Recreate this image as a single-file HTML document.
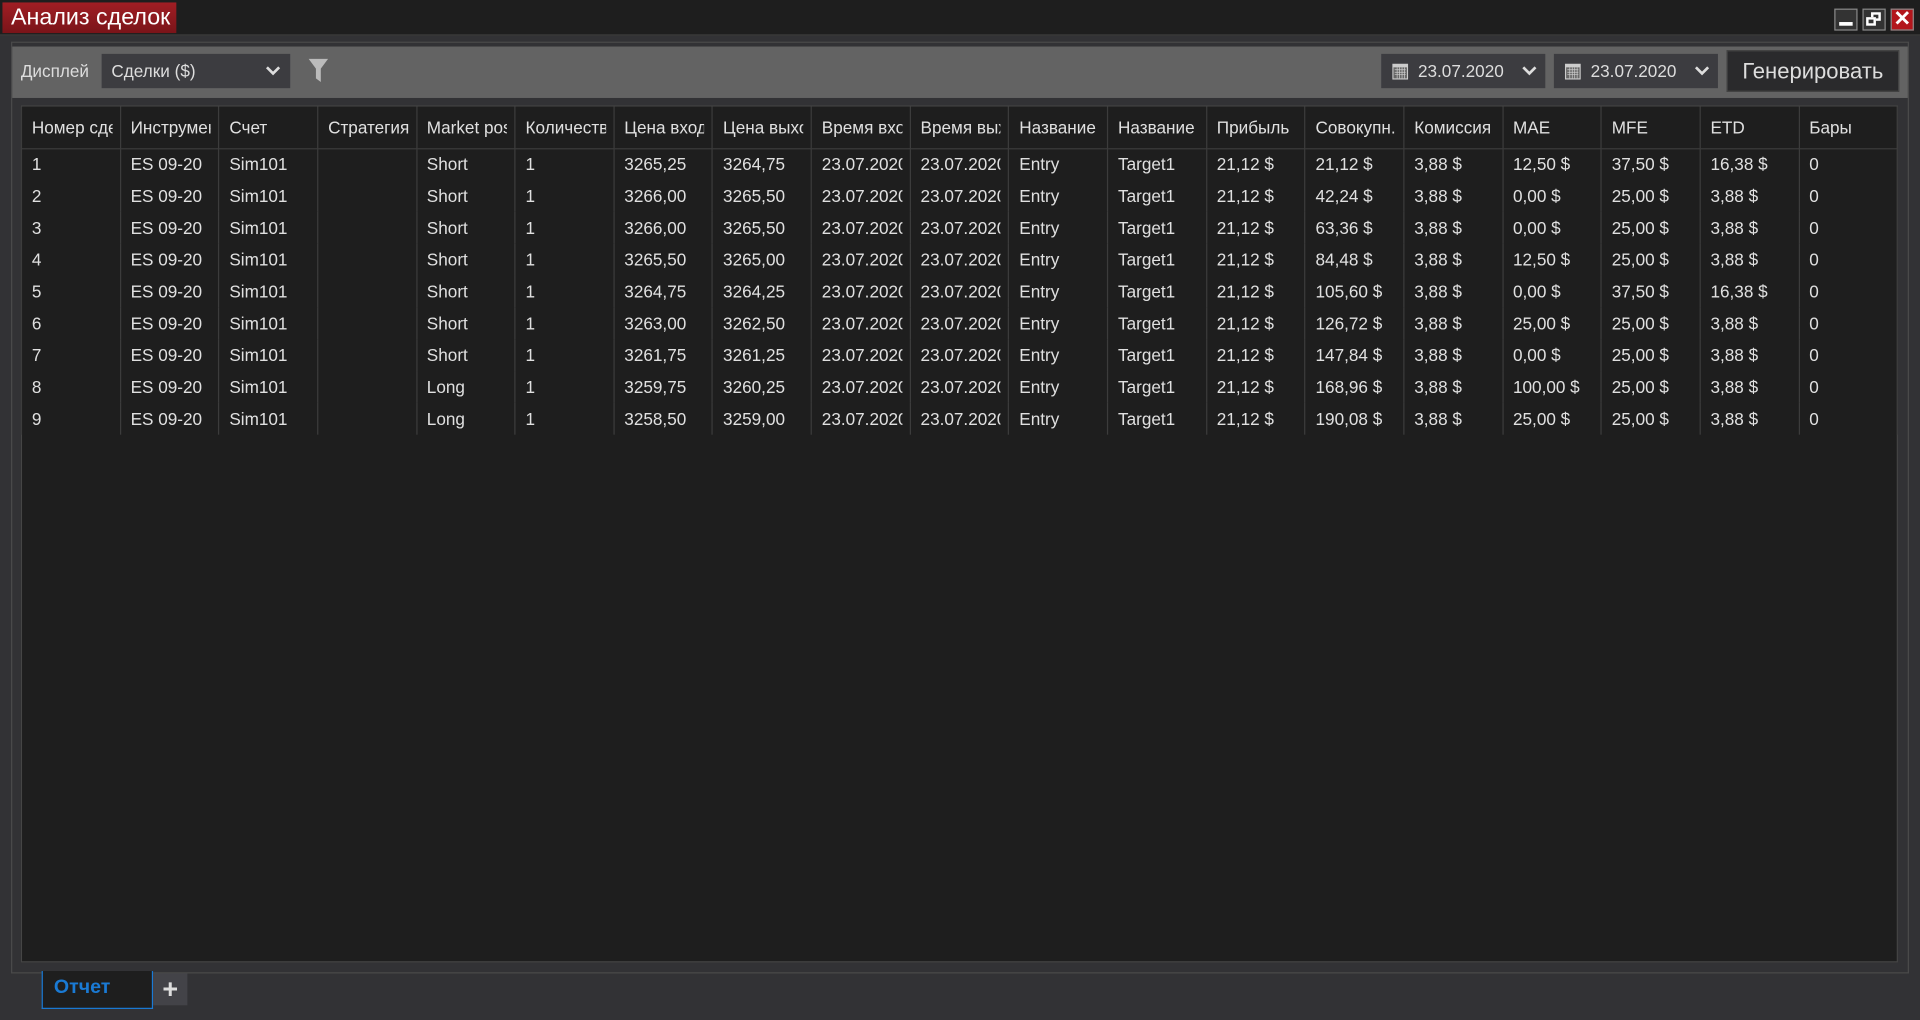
<!DOCTYPE html>
<html><head><meta charset="utf-8"><style>
html,body{margin:0;padding:0;width:1920px;height:1020px;overflow:hidden;background:#323235;}
#s{position:absolute;left:0;top:0;width:1568px;height:833px;transform:scale(1.22449);transform-origin:0 0;font-family:"Liberation Sans",sans-serif;color:#ddd;background:#323235;}
.a{position:absolute;}
#tb{left:0;top:0;width:1568px;height:28px;background:#1e1e1e;border-bottom:1px solid #3a3a3a;}
#tt{left:2px;top:2px;width:142px;height:25px;background:linear-gradient(#a01e24,#7a1419);color:#fff;font-size:19px;line-height:25px;padding-left:7px;box-sizing:border-box;}
.wb{top:7px;width:19px;height:18px;border:1px solid #888;box-sizing:border-box;background:#333;}
#frame{left:9px;top:34px;width:1550px;height:761px;border:1px solid #4a4a4a;box-sizing:border-box;}
#tool{left:10px;top:38px;width:1548px;height:42px;background:#636363;}
.dd{background:#3c3c40;height:28px;top:44px;font-size:14px;line-height:28px;color:#ddd;box-sizing:border-box;}
#grid{left:17px;top:86px;width:1533px;height:700px;background:#1e1e1e;border:1px solid #454545;box-sizing:border-box;}
table{position:absolute;left:17px;top:87px;border-collapse:collapse;font-size:14px;table-layout:fixed;}
td{width:80.65px;max-width:80.65px;padding:0 6px 0 8px;box-sizing:border-box;white-space:nowrap;overflow:hidden;height:26px;border-left:1px solid #3c3c3c;border-right:1px solid #3c3c3c;color:#e0e0e0;}
td b{display:block;overflow:hidden;font-weight:normal;}
tr.h td{height:34px;border-bottom:1px solid #3c3c3c;}
</style></head><body><div id="s">
<div class="a" id="tb"></div>
<div class="a" id="tt">Анализ сделок</div>
<div class="a wb" style="left:1498px"><div class="a" style="left:3px;top:10px;width:11px;height:3px;background:#fff"></div></div>
<div class="a wb" style="left:1521px"><div class="a" style="left:6px;top:2px;width:8px;height:7px;border:2px solid #fff;box-sizing:border-box"></div><div class="a" style="left:2px;top:6px;width:8px;height:7px;border:2px solid #fff;background:#333;box-sizing:border-box"></div></div>
<div class="a wb" style="left:1544px;background:#b3161c;color:#fff;font-size:17px;font-weight:bold;line-height:16px;text-align:center">✕</div>
<div class="a" id="frame"></div>
<div class="a" id="tool"></div>
<div class="a" style="left:17px;top:44px;font-size:14px;line-height:28px;color:#ddd">Дисплей</div>
<div class="a dd" style="left:83px;width:154px;padding-left:8px">Сделки ($)<svg class="a" style="left:134px;top:10px" width="12" height="9" viewBox="0 0 12 9"><path d="M1 1l5 5 5-5" stroke="#ddd" stroke-width="2.2" fill="none"/></svg></div>
<svg class="a" style="left:252px;top:48px" width="16" height="20" viewBox="0 0 16 20"><path d="M0 0h16l-6 8v11l-4-3V8z" fill="#bbb"/></svg>
<div class="a dd" style="left:1128px;width:134px;padding-left:30px">23.07.2020<svg class="a" style="left:9px;top:8px" width="13" height="13"><rect x="0" y="0" width="13" height="13" fill="#ccc"/><rect x="1" y="3" width="11" height="9" fill="#666"/><path d="M2 5h9M2 7h9M2 9h9M4 3v9M6 3v9M8 3v9M10 3v9" stroke="#ccc" stroke-width=".6"/></svg><svg class="a" style="left:115px;top:10px" width="12" height="9"><path d="M1 1l5 5 5-5" stroke="#ddd" stroke-width="2.2" fill="none"/></svg></div>
<div class="a dd" style="left:1269px;width:134px;padding-left:30px">23.07.2020<svg class="a" style="left:9px;top:8px" width="13" height="13"><rect x="0" y="0" width="13" height="13" fill="#ccc"/><rect x="1" y="3" width="11" height="9" fill="#666"/><path d="M2 5h9M2 7h9M2 9h9M4 3v9M6 3v9M8 3v9M10 3v9" stroke="#ccc" stroke-width=".6"/></svg><svg class="a" style="left:115px;top:10px" width="12" height="9"><path d="M1 1l5 5 5-5" stroke="#ddd" stroke-width="2.2" fill="none"/></svg></div>
<div class="a" style="left:1410px;top:41px;width:141px;height:34px;background:#2a2a2c;border:1px solid #444;box-sizing:border-box;font-size:18px;line-height:32px;text-align:center;color:#ddd">Генерировать</div>
<div class="a" id="grid"></div>
<table>
<tr class="h"><td><b>Номер сделки</b></td><td><b>Инструмент</b></td><td><b>Счет</b></td><td><b>Стратегия</b></td><td><b>Market pos.</b></td><td><b>Количество</b></td><td><b>Цена входа</b></td><td><b>Цена выхода</b></td><td><b>Время входа</b></td><td><b>Время выхода</b></td><td><b>Название</b></td><td><b>Название</b></td><td><b>Прибыль</b></td><td><b>Совокупн.</b></td><td><b>Комиссия</b></td><td><b>MAE</b></td><td><b>MFE</b></td><td><b>ETD</b></td><td><b>Бары</b></td></tr>
<tr><td>1</td><td>ES 09-20</td><td>Sim101</td><td></td><td>Short</td><td>1</td><td>3265,25</td><td>3264,75</td><td><b>23.07.2020</b></td><td><b>23.07.2020</b></td><td>Entry</td><td>Target1</td><td>21,12 $</td><td>21,12 $</td><td>3,88 $</td><td>12,50 $</td><td>37,50 $</td><td>16,38 $</td><td>0</td></tr>
<tr><td>2</td><td>ES 09-20</td><td>Sim101</td><td></td><td>Short</td><td>1</td><td>3266,00</td><td>3265,50</td><td><b>23.07.2020</b></td><td><b>23.07.2020</b></td><td>Entry</td><td>Target1</td><td>21,12 $</td><td>42,24 $</td><td>3,88 $</td><td>0,00 $</td><td>25,00 $</td><td>3,88 $</td><td>0</td></tr>
<tr><td>3</td><td>ES 09-20</td><td>Sim101</td><td></td><td>Short</td><td>1</td><td>3266,00</td><td>3265,50</td><td><b>23.07.2020</b></td><td><b>23.07.2020</b></td><td>Entry</td><td>Target1</td><td>21,12 $</td><td>63,36 $</td><td>3,88 $</td><td>0,00 $</td><td>25,00 $</td><td>3,88 $</td><td>0</td></tr>
<tr><td>4</td><td>ES 09-20</td><td>Sim101</td><td></td><td>Short</td><td>1</td><td>3265,50</td><td>3265,00</td><td><b>23.07.2020</b></td><td><b>23.07.2020</b></td><td>Entry</td><td>Target1</td><td>21,12 $</td><td>84,48 $</td><td>3,88 $</td><td>12,50 $</td><td>25,00 $</td><td>3,88 $</td><td>0</td></tr>
<tr><td>5</td><td>ES 09-20</td><td>Sim101</td><td></td><td>Short</td><td>1</td><td>3264,75</td><td>3264,25</td><td><b>23.07.2020</b></td><td><b>23.07.2020</b></td><td>Entry</td><td>Target1</td><td>21,12 $</td><td>105,60 $</td><td>3,88 $</td><td>0,00 $</td><td>37,50 $</td><td>16,38 $</td><td>0</td></tr>
<tr><td>6</td><td>ES 09-20</td><td>Sim101</td><td></td><td>Short</td><td>1</td><td>3263,00</td><td>3262,50</td><td><b>23.07.2020</b></td><td><b>23.07.2020</b></td><td>Entry</td><td>Target1</td><td>21,12 $</td><td>126,72 $</td><td>3,88 $</td><td>25,00 $</td><td>25,00 $</td><td>3,88 $</td><td>0</td></tr>
<tr><td>7</td><td>ES 09-20</td><td>Sim101</td><td></td><td>Short</td><td>1</td><td>3261,75</td><td>3261,25</td><td><b>23.07.2020</b></td><td><b>23.07.2020</b></td><td>Entry</td><td>Target1</td><td>21,12 $</td><td>147,84 $</td><td>3,88 $</td><td>0,00 $</td><td>25,00 $</td><td>3,88 $</td><td>0</td></tr>
<tr><td>8</td><td>ES 09-20</td><td>Sim101</td><td></td><td>Long</td><td>1</td><td>3259,75</td><td>3260,25</td><td><b>23.07.2020</b></td><td><b>23.07.2020</b></td><td>Entry</td><td>Target1</td><td>21,12 $</td><td>168,96 $</td><td>3,88 $</td><td>100,00 $</td><td>25,00 $</td><td>3,88 $</td><td>0</td></tr>
<tr><td>9</td><td>ES 09-20</td><td>Sim101</td><td></td><td>Long</td><td>1</td><td>3258,50</td><td>3259,00</td><td><b>23.07.2020</b></td><td><b>23.07.2020</b></td><td>Entry</td><td>Target1</td><td>21,12 $</td><td>190,08 $</td><td>3,88 $</td><td>25,00 $</td><td>25,00 $</td><td>3,88 $</td><td>0</td></tr>
</table>
<div class="a" style="left:34px;top:793px;width:91px;height:31px;background:#1e1e1e;border:1px solid #1a7ad4;border-top:none;box-sizing:border-box;color:#1a7ad4;font-size:16px;font-weight:bold;line-height:28px;padding-left:9px">Отчет</div>
<div class="a" style="left:125px;top:795px;width:28px;height:26px;background:#434348;color:#ddd;font-size:22px;font-weight:bold;line-height:25px;text-align:center">+</div>
</div></body></html>
